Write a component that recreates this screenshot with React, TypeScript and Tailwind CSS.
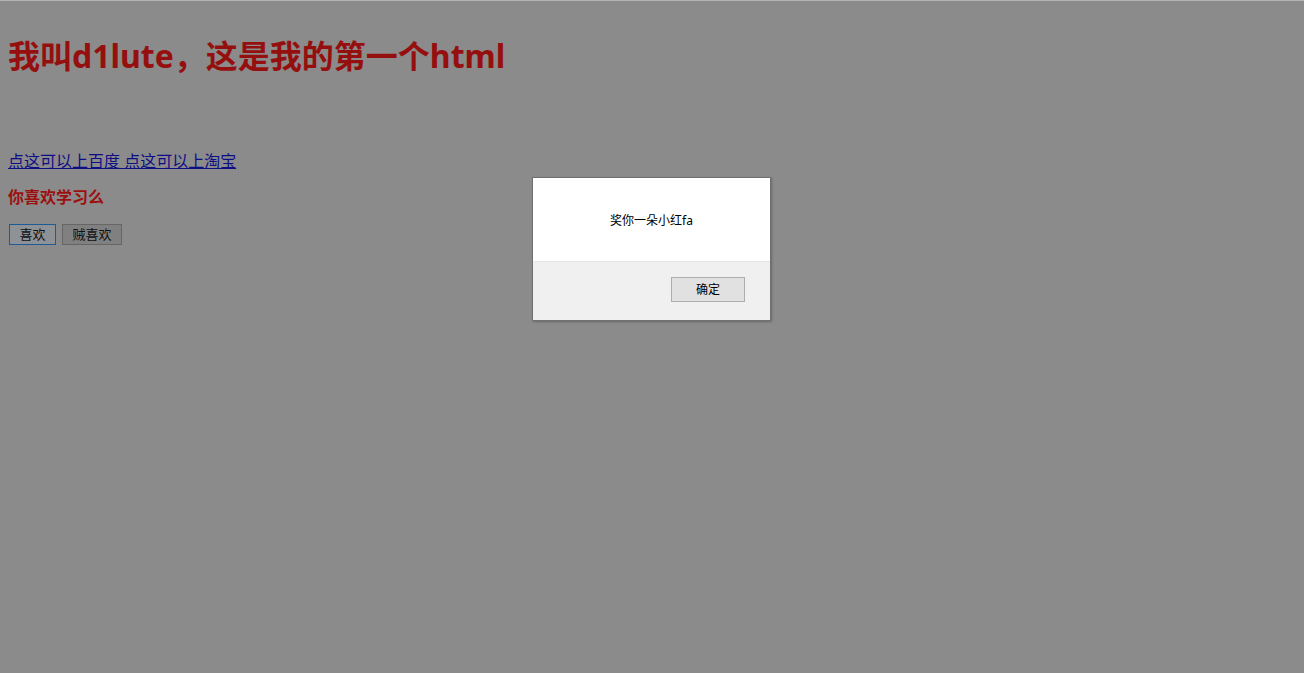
export default function App() {
  return (
    <div
      className="relative h-[673px] w-full overflow-hidden border-t border-[#b4b4b4] bg-[#8b8b8b] px-2"
      style={{ fontFamily: '"Noto Sans", "Noto Sans CJK SC", sans-serif' }}
    >
      <h1 className="mt-[31px] text-[32px] font-bold leading-[48px] text-[#960f0f]">
        我叫d1lute，这是我的第一个html
      </h1>

      <p className="mt-[70px] text-base leading-[22px] text-[#0d0d85] underline">
        点这可以上百度 点这可以上淘宝
      </p>

      <p className="mt-[14px] text-base font-bold leading-[22px] text-[#9c1010]">
        你喜欢学习么
      </p>

      <div className="mt-[16px] flex gap-[6px] pl-px">
        <button className="h-[21px] w-[47px] border border-[#1c5b95] bg-[#8e9196] text-[13px] leading-none text-[#101010]">
          喜欢
        </button>
        <button className="h-[21px] w-[60px] border border-[#666] bg-[#808080] text-[13px] leading-none text-[#101010]">
          贼喜欢
        </button>
      </div>

      {/* alert dialog */}
      <div className="absolute left-[532px] top-[176px] flex h-[144px] w-[239px] flex-col border border-[#707070] bg-white shadow-[1px_1px_2px_rgba(0,0,0,0.25)]">
        <div className="flex h-[84px] items-center justify-center border-b border-[#e5e5e5] pt-[2px] text-xs text-black">
          奖你一朵小红fa
        </div>
        <div className="flex flex-1 items-start justify-end bg-[#f0f0f0] pr-[25px] pt-[15px]">
          <button className="h-[25px] w-[74px] border border-[#adadad] bg-[#e1e1e1] text-xs text-black">
            确定
          </button>
        </div>
      </div>
    </div>
  )
}
